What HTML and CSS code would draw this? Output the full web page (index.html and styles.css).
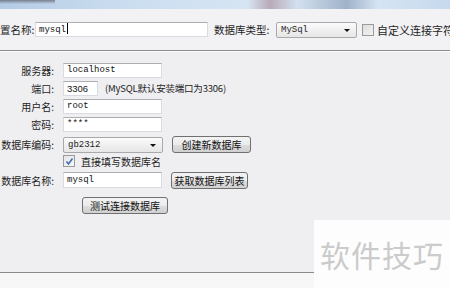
FILE: index.html
```html
<!DOCTYPE html>
<html>

<head>
    <title>数据库连接配置</title>
    <link rel="stylesheet" href="styles.css">
</head>

<body>

    <div class="titlebar"></div>

    <div class="toprow">
        <span class="label-top first">置名称:</span>
        <div class="field name">mysql<span class="caret"></span></div>
        <span class="label-top">数据库类型:</span>
        <div class="select type">MySql<span class="arrow"></span></div>
        <span class="check"></span>
        <span class="check-text">自定义连接字符串</span>
    </div>

    <div class="main">
        <div class="row r1">
            <span class="label">服务器:</span>
            <div class="field wide">localhost</div>
        </div>
        <div class="row r2">
            <span class="label">端口:</span>
            <div class="field port">3306</div>
            <span class="hint">(MySQL默认安装端口为3306)</span>
        </div>
        <div class="row r3">
            <span class="label">用户名:</span>
            <div class="field wide">root</div>
        </div>
        <div class="row r4">
            <span class="label">密码:</span>
            <div class="field wide">****</div>
        </div>
        <div class="row r5">
            <span class="label">数据库编码:</span>
            <div class="select code">gb2312<span class="arrow"></span></div>
            <div class="button">创建新数据库</div>
        </div>
        <div class="row r6">
            <span class="check checked">
                <svg width="9" height="9" viewBox="0 0 9 9"><path d="M1.5 4.5 L3.5 7 L7.5 1.5" fill="none" stroke="#3d6fb3" stroke-width="1.6"/></svg>
            </span>
            <span class="check-text small">直接填写数据库名</span>
        </div>
        <div class="row r7">
            <span class="label">数据库名称:</span>
            <div class="field wide tall">mysql</div>
            <div class="button">获取数据库列表</div>
        </div>
        <div class="row r8">
            <div class="button test">测试连接数据库</div>
        </div>
    </div>

    <div class="footer"></div>

    <div class="watermark">软件技巧</div>

</body>

</html>
```

FILE: styles.css
```css
body {
    margin: 0;
    width: 450px;
    height: 288px;
    overflow: hidden;
    position: relative;
    display: flex;
    flex-direction: column;
    background: #efeef1;
    font-family: "Noto Sans CJK SC", sans-serif;
    font-size: 10.5px;
    color: #1e1e1e;
}

.titlebar {
    height: 9px;
    flex: none;
    background:
        linear-gradient(180deg, rgba(60, 60, 70, 0.55) 0, rgba(60, 60, 70, 0) 4px) 0 0 / 55px 100% no-repeat,
        linear-gradient(90deg, #b4cbe4 0%, #c9dcef 25%, #d6e5f4 55%, #b9aab8 60%, #d2e0ef 66%, #9fb2c9 77%, #d5e4f3 84%, #c6d9ed 100%);
}

.toprow {
    flex: none;
    height: 41px;
    display: flex;
    align-items: center;
    background: #f2f1f3;
    border-bottom: 1px solid #8c8c8c;
    box-shadow: 0 1px 0 #fbfbfb;
    white-space: nowrap;
}

.toprow > * {
    flex: none;
}

.label-top {
    margin-left: 6px;
    width: 57px;
}

.label-top.first {
    margin-left: 0;
    width: 35px;
}

.field {
    flex: none;
    height: 13px;
    line-height: 13px;
    background: #fff;
    border: 1px solid #d8dbe2;
    border-top-color: #abadb3;
    padding-left: 3px;
    font-family: "Liberation Mono", monospace;
    font-size: 9px;
    color: #111;
}

.field.name {
    width: 168px;
}

.caret {
    display: inline-block;
    width: 1px;
    height: 11px;
    margin-left: 1px;
    vertical-align: -2px;
    background: #000;
}

.select {
    flex: none;
    position: relative;
    height: 14px;
    line-height: 14px;
    border: 1px solid #a9a9a9;
    border-radius: 2px;
    background: linear-gradient(#fbfbfb, #f0f0f0 50%, #e6e6e6);
    padding-left: 4px;
    font-family: "Liberation Mono", monospace;
    font-size: 9px;
}

.select.type {
    width: 75px;
    margin-left: 5px;
}

.select.code {
    width: 94px;
}

.arrow {
    position: absolute;
    right: 6px;
    top: 6px;
    border-left: 3px solid transparent;
    border-right: 3px solid transparent;
    border-top: 3px solid #111;
}

.check {
    flex: none;
    width: 10px;
    height: 10px;
    margin-left: 5px;
    border: 1px solid #9a9a9a;
    background: linear-gradient(135deg, #dcdcdc, #f4f4f4);
    display: flex;
    align-items: center;
    justify-content: center;
}

.check-text {
    margin-left: 3px;
    font-size: 11px;
}

.check-text.small {
    font-size: 10px;
    margin-left: 6px;
}

.main {
    flex: 1;
    padding-top: 10px;
    white-space: nowrap;
}

.row {
    display: flex;
    align-items: center;
    height: 18px;
}

.label {
    flex: none;
    width: 54px;
    margin-right: 9px;
    text-align: right;
    font-size: 10px;
}

.field.wide {
    width: 94px;
}

.field.port {
    width: 30px;
    font-family: "Liberation Sans", sans-serif;
    font-size: 9.5px;
}

.field.tall {
    height: 14px;
    line-height: 14px;
}

.hint {
    margin-left: 7px;
    font-size: 9.5px;
    letter-spacing: -0.2px;
}

.r4 {
    height: 19px;
}

.r5 {
    height: 21px;
}

.r6 {
    height: 12px;
    padding-left: 58px;
}

.r6 .check {
    background: linear-gradient(135deg, #e4e4e4, #f8f8f8);
}

.r7 {
    height: 20px;
    margin-top: 3px;
}

.r8 {
    height: 20px;
    margin-top: 5px;
    padding-left: 82px;
}

.button {
    flex: none;
    height: 15px;
    line-height: 15px;
    margin-left: 9px;
    border: 1px solid #707070;
    border-radius: 3px;
    background: linear-gradient(#f3f3f3, #ebebeb 50%, #dddddd 51%, #d0d0d0);
    font-size: 10px;
    text-align: center;
    color: #111;
}

.r5 .button {
    width: 77px;
}

.r7 .button {
    width: 75px;
}

.button.test {
    margin-left: 0;
    width: 84px;
}

.footer {
    flex: none;
    height: 15px;
    border-top: 1px solid #8a8a8a;
    background: #f7f7f8;
}

.watermark {
    position: absolute;
    right: 0;
    bottom: 0;
    width: 136px;
    height: 68px;
    background: #fdfdfd;
    display: flex;
    align-items: center;
    justify-content: center;
    font-size: 30px;
    color: #cbcbcb;
    letter-spacing: 1px;
}
```
